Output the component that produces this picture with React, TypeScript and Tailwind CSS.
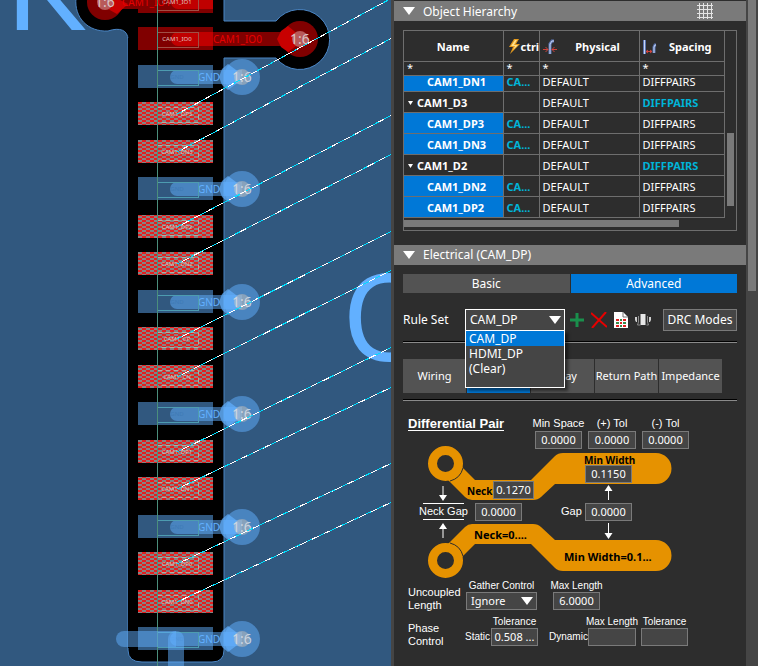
import { ReactNode, SVGProps } from 'react';
import clsx from 'clsx';

type PadKind = 'io' | 'gnd' | 'pair';

interface Pad {
  net: string;
  kind: PadKind;
  y: number;
  ratsnestEnd?: number;
}

const pads: Pad[] = [
  { net: 'CAM1_IO1', kind: 'io', y: -10 },
  { net: 'CAM1_IO0', kind: 'io', y: 27 },
  { net: 'GND', kind: 'gnd', y: 65 },
  { net: 'CAM1_DP3', kind: 'pair', y: 102, ratsnestEnd: -2 },
  { net: 'CAM1_DN3', kind: 'pair', y: 140, ratsnestEnd: 38 },
  { net: 'GND', kind: 'gnd', y: 177 },
  { net: 'CAM1_DP2', kind: 'pair', y: 215, ratsnestEnd: 115 },
  { net: 'CAM1_DN2', kind: 'pair', y: 252, ratsnestEnd: 154 },
  { net: 'GND', kind: 'gnd', y: 290 },
  { net: 'CAM1_CP', kind: 'pair', y: 327, ratsnestEnd: 231 },
  { net: 'CAM1_CN', kind: 'pair', y: 365, ratsnestEnd: 270 },
  { net: 'GND', kind: 'gnd', y: 402 },
  { net: 'CAM1_DP1', kind: 'pair', y: 440, ratsnestEnd: 347 },
  { net: 'CAM1_DN1', kind: 'pair', y: 477, ratsnestEnd: 387 },
  { net: 'GND', kind: 'gnd', y: 515 },
  { net: 'CAM1_DP0', kind: 'pair', y: 552, ratsnestEnd: 463 },
  { net: 'CAM1_DN0', kind: 'pair', y: 590, ratsnestEnd: 502 },
  { net: 'GND', kind: 'gnd', y: 627 },
];

interface HierarchyRow {
  name: string;
  group?: boolean;
}

const rows: HierarchyRow[] = [
  { name: 'CAM1_DN1' },
  { name: 'CAM1_D3', group: true },
  { name: 'CAM1_DP3' },
  { name: 'CAM1_DN3' },
  { name: 'CAM1_D2', group: true },
  { name: 'CAM1_DN2' },
  { name: 'CAM1_DP2' },
];

const ruleTabs = ['Wiring', 'Diff Pair', 'Delay', 'Return Path', 'Impedance'];
const ruleSets = ['CAM_DP', 'HDMI_DP', '(Clear)'];

function Via({ x, y, color }: { x: number; y: number; color: string }) {
  return (
    <g>
      <path d={`M${x - 23} ${y}l3 -8l6 -5l12 9v8l-12 9l-6 -5z`} fill={color} fillOpacity=".7" />
      <circle cx={x} cy={y} r="18" fill={color} fillOpacity=".5" />
      <circle cx={x} cy={y} r="8" fill="#c8c0b8" fillOpacity=".5" />
      <text x={x} y={y + 5} textAnchor="middle" fontSize="14" fill="#d5dbe5" fillOpacity=".9">1:6</text>
    </g>
  );
}

function PadShape({ pad }: { pad: Pad }) {
  const mid = pad.y + 12;
  return (
    <g>
      {pad.kind === 'io' && <rect x="138" y={pad.y} width="75" height="23" fill="#800000" />}
      {pad.kind === 'gnd' && <rect x="138" y={pad.y} width="75" height="23" fill="#31587f" />}
      {pad.kind === 'pair' && <rect x="138" y={pad.y} width="75" height="23" fill="url(#hatch)" />}
      {pad.kind === 'gnd' && (
        <>
          <path d={`M177 ${mid - 7}h65v14h-65a7 7 0 0 1 0 -14z`} fill="#62b0ff" fillOpacity=".5" />
          <text x="209" y={mid + 4} textAnchor="middle" fontSize="10" fill="#62b0ff">GND</text>
          <Via x={242} y={mid} color="#62b0ff" />
        </>
      )}
      {pad.kind === 'io' && (
        <path d={`M178 ${mid - 7}h35v14h-35a7 7 0 0 1 0 -14z`} fill="#c00000" />
      )}
      <rect
        x="157.5"
        y={pad.y + 5.5}
        width="41"
        height="15"
        fill="none"
        stroke={pad.kind === 'io' ? '#a05046' : pad.kind === 'gnd' ? '#4d9cb0' : '#b8aaa2'}
        strokeDasharray={pad.kind === 'pair' ? '5 3' : undefined}
      />
      <text
        x="177"
        y={mid + 2}
        textAnchor="middle"
        fontSize="6"
        fill={pad.kind === 'gnd' ? '#3f7ab5' : '#e0c4c0'}
      >
        {pad.net}
      </text>
    </g>
  );
}

function BoardCanvas() {
  return (
    <svg className="block h-full w-full" fontFamily="'Noto Sans', sans-serif" role="img" aria-label="Board layout">
      <defs>
        <pattern id="hatch" x="138" y="102" width="8" height="4" patternUnits="userSpaceOnUse">
          <rect width="8" height="4" fill="#848484" />
          <rect width="4" height="2" fill="#e61e1e" />
          <rect x="4" y="2" width="4" height="2" fill="#e61e1e" />
        </pattern>
      </defs>
      <rect width="100%" height="100%" fill="#31587f" />
      <g fill="#62b0ff">
        <text x="7" y="30" fontSize="120" fontFamily="'Liberation Sans', sans-serif">K</text>
        <text x="342" y="361" fontSize="121">O</text>
      </g>

      {/* Clearance around the connector row */}
      <path
        d="M76 -2C74 18 88 32 108 31C120 27 128 30 128 40V650Q128 662 142 662H212Q224 662 224 650V58H276A30 30 0 1 0 276 21H224V-2z"
        fill="#000000"
        stroke="#4a85c4"
        strokeWidth="1"
      />
      <path d="M129 38V648" stroke="#000000" strokeWidth="2" />

      {/* Escape traces of the two IO nets */}
      <g fill="#800000">
        <path d="M105 -5H140V9H105z" />
        <path d="M213 32H300V46H213z" />
      </g>
      {pads.map((pad) => (
        <PadShape key={`${pad.net}-${pad.y}`} pad={pad} />
      ))}
      <path d="M157.5 0V666" stroke="#4b8f7c" />
      <circle cx="105" cy="2" r="18" fill="#800000" />
      <path d="M112 -4L128 4L117 14L108 9z" fill="#c80000" />
      <circle cx="105" cy="2" r="8" fill="#b85a5a" />
      <circle cx="300" cy="39" r="18" fill="#800000" />
      <path d="M277 39L281 31L288 26L300 36V43L288 52L281 47z" fill="#c80000" />
      <circle cx="300" cy="39" r="8" fill="#b85a5a" />
      <g fill="#d8c4c4" fontSize="14" textAnchor="middle">
        <text x="105" y="7">1:6</text>
        <text x="300" y="44">1:6</text>
      </g>
      <g fill="#e60000" fontSize="10">
        <text x="122" y="6">CAM1_IO1</text>
        <text x="213" y="43">CAM1_IO0</text>
      </g>

      <g fill="#62b0ff" fillOpacity=".5">
        <path d="M124 631H176V647H124A8 8 0 0 1 124 631z" />
        <path d="M168 639A8 8 0 0 1 184 639V666H168z" />
      </g>

      {/* Ratsnest */}
      <g shapeRendering="crispEdges" strokeWidth="1">
        {pads
          .filter((pad) => pad.ratsnestEnd !== undefined)
          .map((pad) => (
            <g key={pad.net}>
              <line x1="177" y1={pad.y + 12} x2="392" y2={pad.ratsnestEnd} stroke="#ffffff" />
              <line
                x1="177"
                y1={pad.y + 12}
                x2="392"
                y2={pad.ratsnestEnd}
                stroke="#00e0ff"
                strokeDasharray="6 7"
              />
            </g>
          ))}
      </g>
    </svg>
  );
}

function Caret(props: SVGProps<SVGSVGElement>) {
  return (
    <svg width="12" height="8" viewBox="0 0 12 8" fill="#ffffff" {...props}>
      <path d="M0 0h12L6 8z" />
    </svg>
  );
}

function SectionHeader({ title, grid }: { title: string; grid?: boolean }) {
  return (
    <div className="flex h-5 items-center bg-[#7a7a7a] pr-8 pl-[9px]">
      <button type="button" className="flex items-center gap-2" aria-expanded="true">
        <Caret />
        <span className="pt-px text-xs leading-5">{title}</span>
      </button>
      {grid && (
        <svg className="ml-auto" width="18" height="18" viewBox="0 0 18 18" stroke="#e4e4e4" fill="none">
          <path d="M3.5 1v16M7.5 1v16M11.5 1v16M15.5 1v16M1 3.5h16M1 7.5h16M1 11.5h16M1 15.5h16" />
        </svg>
      )}
    </div>
  );
}

function BoltIcon() {
  return (
    <svg width="11" height="15" viewBox="0 0 11 15" className="shrink-0">
      <path d="M5 0h5L7 5h4L1 15l3-7H0z" fill="#e59a1c" />
      <path d="M6 1h2L5 6h4L4 11l2-4H2z" fill="#ffe08a" />
    </svg>
  );
}

function PhysicalIcon() {
  return (
    <svg width="14" height="16" viewBox="0 0 14 16" className="shrink-0" fill="none">
      <path d="M11 2H9L7 5v10" stroke="#5a74b0" strokeWidth="3" />
      <path d="M11 2H9L7 5v10" stroke="#c8d6f5" />
      <path d="M0 10.5h5M2.5 8l2.5 2.5L2.5 13M14 10.5H9M11.5 8L9 10.5L11.5 13" stroke="#d0433c" />
    </svg>
  );
}

function SpacingIcon() {
  return (
    <svg width="14" height="16" viewBox="0 0 14 16" className="shrink-0" fill="none">
      <path d="M1.5 1v14M13 6h-1l-1 2v6" stroke="#5a74b0" strokeWidth="3" />
      <path d="M1.5 1v14M13 6h-1l-1 2v6" stroke="#c8d6f5" />
      <path d="M3 12.5h6M5 11L3 12.5L5 14M7 11l2 1.5L7 14" stroke="#d0433c" />
    </svg>
  );
}

const cell = 'border-r border-b border-[#6e6e6e] pl-[3px]';

function HierarchyTable() {
  return (
    <div className="mx-[9px] mt-[9px] border border-[#6e6e6e]">
      <div className="flex">
        <div className="min-w-0 flex-1">
          <table className="w-full table-fixed border-collapse text-[11px] leading-4">
            <colgroup>
              <col className="w-[99px]" />
              <col className="w-9" />
              <col className="w-[100px]" />
              <col />
            </colgroup>
            <thead>
              <tr className="h-[30px] font-bold">
                <th className="border-r border-b border-[#6e6e6e] pt-[2px]">Name</th>
                <th className="overflow-hidden border-r border-b border-[#6e6e6e] pt-[2px] pl-[5px]">
                  <span className="flex items-center gap-px">
                    <BoltIcon />
                    ctri
                  </span>
                </th>
                <th className={clsx(cell, 'pt-[2px]')}>
                  <span className="flex items-center">
                    <PhysicalIcon />
                    <span className="flex-1">Physical</span>
                  </span>
                </th>
                <th className={clsx(cell, 'pt-[2px]')}>
                  <span className="flex items-center">
                    <SpacingIcon />
                    <span className="flex-1">Spacing</span>
                  </span>
                </th>
              </tr>
            </thead>
            <tbody>
              <tr className="h-[14px] leading-3">
                {[0, 1, 2, 3].map((i) => (
                  <td key={i} className={cell}>*</td>
                ))}
              </tr>
              {rows.map(({ name, group }, i) => (
                <tr key={name} className={i === 0 ? 'h-4 align-top leading-3' : 'h-[21px] leading-[18px]'}>
                  <td
                    className={clsx(
                      'border-r border-b border-[#6e6e6e] font-bold',
                      i > 0 && 'pt-[2px]',
                      group ? 'pl-1' : 'bg-[#0078d7] pl-[23px]'
                    )}
                  >
                    {group ? (
                      <span className="flex items-center gap-1">
                        <svg width="5" height="4" viewBox="0 0 5 4" fill="#ffffff">
                          <path d="M0 0h5L2.5 4z" />
                        </svg>
                        {name}
                      </span>
                    ) : (
                      name
                    )}
                  </td>
                  <td className={clsx(cell, i > 0 && 'pt-[2px]', 'font-bold text-[#00b4d8]')}>
                    {group ? '' : 'CA...'}
                  </td>
                  <td className={clsx(cell, i > 0 && 'pt-[2px]')}>DEFAULT</td>
                  <td className={clsx(cell, i > 0 && 'pt-[2px]', group && 'font-bold text-[#00b4d8]')}>
                    DIFFPAIRS
                  </td>
                </tr>
              ))}
            </tbody>
          </table>
        </div>
        <div className="flex w-[11px] flex-col items-center justify-end pb-3">
          <div className="h-[73px] w-[7px] bg-[#7a7a7a]" />
        </div>
      </div>
      <div className="flex h-3 items-center">
        <div className="h-[7px] w-[275px] bg-[#7a7a7a]" />
      </div>
    </div>
  );
}

function Divider() {
  return <div className="mx-[9px] h-[2px] border-t border-b border-t-black border-b-[#8a8a8a]" />;
}

function RuleSetRow() {
  return (
    <div className="mx-[9px] mt-4 flex h-[22px] items-center text-xs">
      <label htmlFor="rule-set" className="w-[62px] pt-px">Rule Set</label>
      <div className="relative w-[100px]">
        <select
          id="rule-set"
          defaultValue="CAM_DP"
          className="block h-[22px] w-full appearance-none border border-white bg-[#454545] pt-px pl-1 text-xs outline-none"
        >
          {ruleSets.map((name) => (
            <option key={name}>{name}</option>
          ))}
        </select>
        <Caret className="pointer-events-none absolute top-[7px] right-1" />
        <ul className="absolute top-full left-0 z-10 -mt-px h-[58px] w-full border border-white bg-[#454545] shadow-[3px_3px_3px_rgba(0,0,0,0.5)]">
          {ruleSets.map((name, i) => (
            <li key={name} className={clsx('h-[15px] pl-[3px] leading-[15px]', i === 0 && 'bg-[#0078d7]')}>
              {name}
            </li>
          ))}
        </ul>
      </div>
      <div className="ml-1 flex items-center gap-[6px]">
        <button type="button" aria-label="Add rule set">
          <svg width="16" height="16" viewBox="0 0 16 16" stroke="#1a8f4c" strokeWidth="3">
            <path d="M8 1v14M1 8h14" />
          </svg>
        </button>
        <button type="button" aria-label="Delete rule set">
          <svg width="16" height="16" viewBox="0 0 16 16" stroke="#e60000" strokeWidth="2" fill="none">
            <path d="M0 1l16 14M15 0L1 16" />
          </svg>
        </button>
        <button type="button" aria-label="Open worksheet">
          <svg width="16" height="16" viewBox="0 0 16 16">
            <path d="M1 0h9l5 5v11H1z" fill="#ffffff" />
            <path d="M10 0v5h5" fill="none" stroke="#777777" />
            <path d="M3 8h3M10 8h3M7 11h2M3 14h3M10 14h3" stroke="#e02020" strokeWidth="2" />
            <path d="M7 8h2M3 11h3M10 11h3M7 14h2" stroke="#3a8a4a" strokeWidth="2" />
          </svg>
        </button>
        <button type="button" aria-label="Pick component">
          <svg width="16" height="16" viewBox="0 0 16 16">
            <path d="M5.5 2h5v11h-5z" fill="#e8e8e8" />
            <path d="M0 5h2v5H1L0 8zM14 5h2v3l-1 2h-1z" fill="#d0d0d0" />
            <path d="M3.5 4v6l-1 3h3M12.5 4v6l1 3h-2" fill="none" stroke="#8a8a8a" />
          </svg>
        </button>
      </div>
      <button type="button" className="ml-auto h-[22px] w-[74px] border border-[#7a7a7a] bg-[#454545] pt-px text-xs whitespace-nowrap">
        DRC Modes
      </button>
    </div>
  );
}

interface FieldProps {
  label: string;
  value?: string;
  className?: string;
}

function Field({ label, value = '', className = 'w-[47px]' }: FieldProps) {
  return (
    <input
      type="text"
      aria-label={label}
      defaultValue={value}
      className={clsx(
        "block h-[18px] border border-[#7a7a7a] bg-[#454545] text-center font-['Noto_Sans',sans-serif] text-[11px] outline-none",
        className
      )}
    />
  );
}

function Stacked({ caption, small, children }: { caption: string; small?: boolean; children: ReactNode }) {
  return (
    <label className="flex flex-col items-center whitespace-nowrap">
      <span className={clsx('flex w-0 justify-center leading-3', small ? 'pt-px text-[10px]' : 'mb-[2px] text-[11px]')}>
        {caption}
      </span>
      {children}
    </label>
  );
}

function PairDiagram() {
  return (
    <div className="relative h-[130px]">
      <svg className="block overflow-visible" width="352" height="130" viewBox="394 449 352 130">
        <g fill="#e69200">
          <path d="M459 464L475 480H531L555 456Q558 453 563 453H656A15 15 0 0 1 656 484H555L541 497Q538 500 533 500H472Q468 500 465 497L445 477z" />
          <path d="M459 560L475 544H531L555 568Q558 571 563 571H656A15 15 0 0 0 656 540H555L541 527Q538 524 533 524H472Q468 524 465 527L445 547z" />
        </g>
        <g fill="#2d2d2d" stroke="#e69200" strokeWidth="9">
          <circle cx="445.5" cy="463.5" r="13" />
          <circle cx="445.5" cy="560.5" r="13" />
        </g>
        <g fill="none" stroke="#2d2d2d">
          <path d="M463 468A18 18 0 0 1 450 481" />
          <path d="M463 556A18 18 0 0 0 450 543" />
        </g>
        <g stroke="#ffffff" fill="#ffffff">
          <path d="M443 486v12M443 538v-12M608.5 500v-12M608.5 523v12" />
          <path d="M423 503.5h41M423 519.5h41" />
          <path d="M439 495h8l-4 6zM439 529h8l-4 -6zM604.5 491h8l-4 -6zM604.5 533h8l-4 6z" stroke="none" />
        </g>
        <g fontFamily="'Noto Sans', sans-serif" fontSize="10" fontWeight="700" fill="#000000">
          <text x="467" y="495">Neck</text>
          <text x="584" y="464">Min Width</text>
          <text x="474" y="539" fontSize="11">Neck=0....</text>
          <text x="564" y="561" fontSize="11">Min Width=0.1...</text>
        </g>
        <g fontSize="11" fill="#ffffff">
          <text x="419" y="515">Neck Gap</text>
          <text x="561" y="515">Gap</text>
        </g>
      </svg>
      <Field label="Neck" value="0.1270" className="absolute top-8 left-[99px] w-[41px]" />
      <Field label="Min Width" value="0.1150" className="absolute top-4 left-[191px] w-[47px]" />
      <Field label="Neck Gap" value="0.0000" className="absolute top-[54px] left-[81px] w-[47px]" />
      <Field label="Gap" value="0.0000" className="absolute top-[54px] left-[191px] w-[47px]" />
    </div>
  );
}

function DifferentialPair() {
  return (
    <section className="pt-4 font-['Liberation_Sans',sans-serif] text-[11px]">
      <div className="flex items-start pl-[14px]">
        <h2 className="w-[127px] text-[13px] leading-[13px] font-bold whitespace-nowrap">
          <span className="inline-block border-b border-white">Differential Pair</span>
        </h2>
        <div className="flex gap-[6px]">
          <Stacked caption="Min Space">
            <Field label="Min Space" value="0.0000" />
          </Stacked>
          <Stacked caption="(+) Tol">
            <Field label="(+) Tol" value="0.0000" className="w-12" />
          </Stacked>
          <Stacked caption="(-) Tol">
            <Field label="(-) Tol" value="0.0000" />
          </Stacked>
        </div>
      </div>
      <PairDiagram />
      <div className="flex flex-col gap-1 pl-[14px]">
        <div className="flex h-8 items-start">
          <span className="w-[58px] pt-[7px] leading-[13px]">Uncoupled<br />Length</span>
          <Stacked caption="Gather Control" small>
            <span className="relative block w-[71px]">
              <select className="block h-[18px] w-full appearance-none border border-[#7a7a7a] bg-[#454545] pl-1 font-['Noto_Sans',sans-serif] text-[11px] leading-4 outline-none">
                <option>Ignore</option>
              </select>
              <Caret className="pointer-events-none absolute top-[5px] right-1" />
            </span>
          </Stacked>
          <div className="w-4" />
          <Stacked caption="Max Length" small>
            <Field label="Max Length" value="6.0000" />
          </Stacked>
        </div>
        <div className="flex h-8 items-start">
          <span className="w-[57px] pt-[7px] leading-[13px]">Phase<br />Control</span>
          <span className="w-[26px] pt-4 text-[10px] leading-3">Static</span>
          <Stacked caption="Tolerance" small>
            <Field label="Static tolerance" value="0.508 ..." />
          </Stacked>
          <span className="w-[50px] pt-4 pl-[11px] text-[10px] leading-3">Dynamic</span>
          <div className="flex gap-[5px]">
            <Stacked caption="Max Length" small>
              <Field label="Dynamic max length" className="w-12" />
            </Stacked>
            <Stacked caption="Tolerance" small>
              <Field label="Dynamic tolerance" />
            </Stacked>
          </div>
        </div>
      </div>
    </section>
  );
}

export default function App() {
  return (
    <div className="flex h-screen overflow-hidden bg-[#2d2d2d] font-['Noto_Sans',sans-serif] text-white">
      <main className="min-w-0 flex-1 overflow-hidden">
        <BoardCanvas />
      </main>
      <aside className="flex w-[367px] shrink-0 border-l-3 border-[#454545]">
        <div className="min-w-0 flex-1 pt-px">
          <SectionHeader title="Object Hierarchy" grid />
          <HierarchyTable />
          <div className="h-[14px]" />
          <SectionHeader title="Electrical (CAM_DP)" />
          <div className="mx-[9px] mt-[9px] grid grid-cols-2 gap-px text-xs" role="tablist">
            <button type="button" role="tab" className="h-[19px] bg-[#535353] pt-[2px]">Basic</button>
            <button type="button" role="tab" aria-selected="true" className="h-[19px] bg-[#0078d7] pt-[2px]">Advanced</button>
          </div>
          <RuleSetRow />
          <div className="h-[10px]" />
          <Divider />
          <div className="mx-[9px] mt-4 mb-[6px] flex gap-px text-[11px]">
            {ruleTabs.map((tab) => (
              <button
                key={tab}
                type="button"
                className={clsx('h-[34px] w-[63px] pt-[2px] whitespace-nowrap', tab === 'Diff Pair' ? 'bg-[#0078d7]' : 'bg-[#535353]')}
              >
                {tab}
              </button>
            ))}
          </div>
          <Divider />
          <DifferentialPair />
        </div>
        <div className="w-3 bg-[#454545] px-[2px]">
          <div className="h-[291px] bg-[#7a7a7a]" />
        </div>
      </aside>
    </div>
  );
}
